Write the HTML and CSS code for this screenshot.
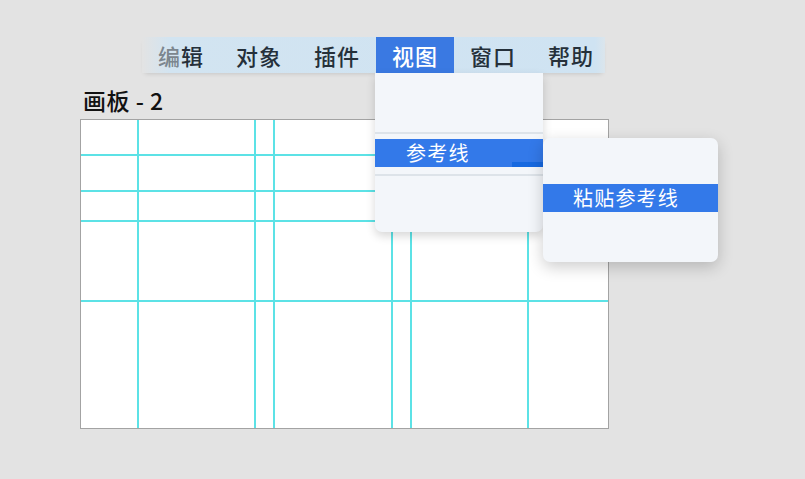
FILE: index.html
```html
<!DOCTYPE html>
<html lang="zh">
<head>
<meta charset="utf-8">
<link rel="stylesheet" href="styles.css">
</head>
<body>
<div class="page">
  <nav class="menubar">
    <div class="item"><span class="fade">编</span>辑</div>
    <div class="item">对象</div>
    <div class="item">插件</div>
    <div class="item active">视图</div>
    <div class="item">窗口</div>
    <div class="item">帮助</div>
  </nav>
  <div class="board-area">
    <div class="board-label">画板 - 2</div>
    <div class="artboard">
      <div class="guide v v1"></div>
      <div class="guide v v2"></div>
      <div class="guide v v3"></div>
      <div class="guide v v4"></div>
      <div class="guide v v5"></div>
      <div class="guide v v6"></div>
      <div class="guide h h1"></div>
      <div class="guide h h2"></div>
      <div class="guide h h3"></div>
      <div class="guide h h4"></div>
    </div>
  </div>
  <div class="menu menu-view">
    <div class="menu-space-top"></div>
    <div class="sep"></div>
    <div class="row selected">参考线<span class="row-edge"></span></div>
    <div class="sep sep-lower"></div>
  </div>
  <div class="menu menu-sub">
    <div class="row selected sub-row">粘贴参考线</div>
  </div>
</div>
</body>
</html>
```

FILE: styles.css
```css
html, body {
  margin: 0;
  padding: 0;
}
body {
  background: #e3e3e3;
  font-family: "Noto Sans CJK SC", "Noto Sans", sans-serif;
  width: 805px;
  height: 479px;
  overflow: hidden;
}
.page {
  position: relative;
  padding-top: 37px;
  height: 442px;
}
.menubar {
  display: flex;
  margin-left: 142px;
  width: 463px;
  height: 36px;
  background: linear-gradient(to right, #e3e3e3 0px, #d2e4f1 28px, #cfe3f2 calc(100% - 10px), #dbe5ec 100%);
  box-shadow: 0 3px 5px -3px rgba(0, 0, 0, 0.18);
  overflow: visible;
}
.item {
  flex: 0 0 auto;
  width: 78px;
  height: 36px;
  box-sizing: border-box;
  display: flex;
  align-items: center;
  justify-content: center;
  font-size: 22px;
  font-weight: 500;
  letter-spacing: 1px;
  color: #25303a;
  white-space: nowrap;
}
.item .fade {
  color: #7c868e;
}
.item.active {
  background: #3a79e2;
  color: #ffffff;
}
.board-area {
  margin-left: 80px;
  margin-top: 12px;
}
.board-label {
  margin-left: 3px;
  font-size: 23px;
  font-weight: 500;
  letter-spacing: 0.5px;
  line-height: 30px;
  height: 30px;
  color: #111111;
  margin-bottom: 4px;
}
.artboard {
  position: relative;
  width: 527px;
  height: 308px;
  background: #ffffff;
  border: 1px solid #a3a3a3;
}
.guide {
  position: absolute;
  background: #5ce2e6;
}
.guide.v {
  top: 0;
  bottom: 0;
  width: 2px;
}
.guide.h {
  left: 0;
  right: 0;
  height: 2px;
}
.v1 { left: 56px; }
.v2 { left: 173px; }
.v3 { left: 192px; }
.v4 { left: 310px; }
.v5 { left: 329px; }
.v6 { left: 446px; }
.h1 { top: 34px; }
.h2 { top: 70px; }
.h3 { top: 100px; }
.h4 { top: 180px; }

.menu {
  position: absolute;
  background: #f3f6fa;
  box-sizing: border-box;
}
.menu-view {
  left: 375px;
  top: 73px;
  width: 168px;
  height: 159px;
  border-radius: 0 0 7px 7px;
  box-shadow: 0 4px 10px rgba(0, 0, 0, 0.16);
}
.menu-space-top {
  height: 59px;
}
.sep {
  height: 2px;
  background: #dde3e9;
  margin-bottom: 5px;
}
.sep-lower {
  margin-top: 7px;
}
.row {
  position: relative;
  height: 28px;
  line-height: 28px;
  font-size: 20px;
  letter-spacing: 1.2px;
  color: #ffffff;
  white-space: nowrap;
}
.row.selected {
  background: #3379e9;
}
.menu-view .row {
  padding-left: 31px;
}
.row-edge {
  position: absolute;
  right: 0;
  bottom: 0;
  width: 31px;
  height: 5px;
  background: #1769e0;
}
.menu-sub {
  left: 543px;
  top: 138px;
  width: 175px;
  height: 124px;
  border-radius: 7px;
  padding-top: 46px;
  box-shadow: 0 5px 16px rgba(0, 0, 0, 0.2);
}
.sub-row {
  padding-left: 30px;
  font-size: 20px;
}
```
